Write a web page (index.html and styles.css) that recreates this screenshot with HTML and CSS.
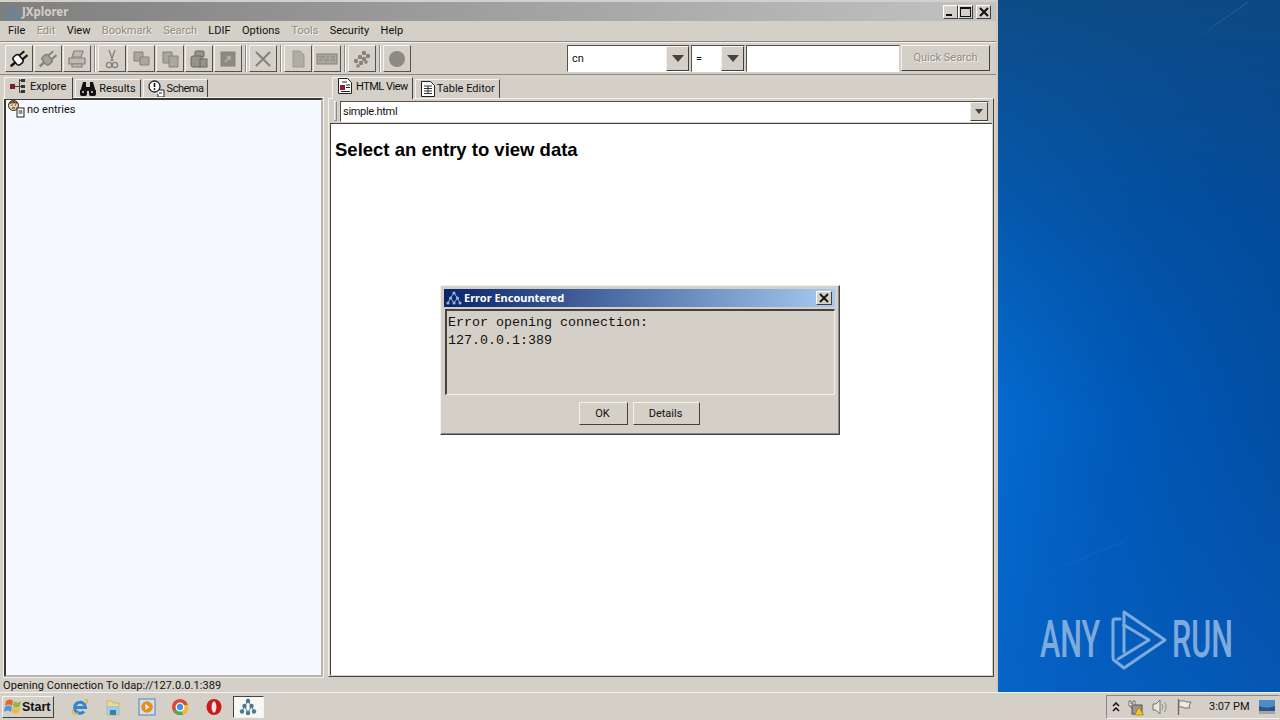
FILE: index.html
```html
<!DOCTYPE html>
<html lang="en">

<head>
  <meta charset="UTF-8" />
  <title>JXplorer</title>
  <link rel="stylesheet" href="styles.css">
</head>

<body>
  <div class="desktop">
    <div class="window">
      <div class="titlebar">
        <svg class="title-icon" width="16" height="16" viewBox="0 0 16 16"><path d="M8 3L4 8l-2 5M8 3l4 5 2 5M4 8l4 5 4-5" fill="none" stroke="#5f86a8"/><g fill="#5f86a8"><circle cx="8" cy="3" r="2"/><circle cx="4" cy="8" r="2"/><circle cx="12" cy="8" r="2"/><circle cx="2" cy="13" r="2"/><circle cx="8" cy="13" r="2"/><circle cx="14" cy="13" r="2"/></g></svg>
        <span class="title-text">JXplorer</span>
        <div class="win-buttons">
          <div class="win-btn"><span class="glyph-min"></span></div>
          <div class="win-btn"><span class="glyph-max"></span></div>
          <div class="win-btn win-close">
            <svg width="10" height="10" viewBox="0 0 10 10"><path d="M1 1l8 8M9 1l-8 8" stroke="#111" stroke-width="2"/></svg>
          </div>
        </div>
      </div>

      <div class="menubar">
        <span class="menu-item">File</span>
        <span class="menu-item off">Edit</span>
        <span class="menu-item">View</span>
        <span class="menu-item off">Bookmark</span>
        <span class="menu-item off">Search</span>
        <span class="menu-item">LDIF</span>
        <span class="menu-item">Options</span>
        <span class="menu-item off">Tools</span>
        <span class="menu-item">Security</span>
        <span class="menu-item">Help</span>
      </div>

      <div class="toolbar">
        <div class="tool-group">
          <div class="tool">
            <svg width="22" height="22" viewBox="0 0 22 22"><g transform="rotate(-40 11 11)"><rect x="0" y="10" width="6" height="2.500" fill="#111"/><rect x="6" y="6" width="7.500" height="10" rx="2.500" fill="#fff" stroke="#111" stroke-width="1.500"/><path d="M13 8.500h7M13 13.500h7" stroke="#111" stroke-width="2"/></g></svg>
          </div>
          <div class="tool">
            <svg width="22" height="22" viewBox="0 0 22 22"><g transform="rotate(-40 11 11)"><rect x="0" y="10" width="6" height="2.500" fill="#85827b"/><rect x="6" y="6" width="7.500" height="10" rx="2.500" fill="#a5a29b" stroke="#85827b" stroke-width="1.500"/><path d="M13 8.500h7M13 13.500h7" stroke="#85827b" stroke-width="2"/></g></svg>
          </div>
          <div class="tool">
            <svg width="22" height="22" viewBox="0 0 22 22"><g fill="#bcb9b1" stroke="#85827b" stroke-width="1.200"><path d="M8 3h9l-2 6H6z"/><path d="M3 10h16v6H3z"/><path d="M6 16h10v3H6z"/></g></svg>
          </div>
        </div>
        <div class="tool-group">
          <div class="tool">
            <svg width="22" height="22" viewBox="0 0 22 22"><g fill="none" stroke="#85827b" stroke-width="1.300"><path d="M8 2l4 11M14 2l-4 11"/><circle cx="8" cy="17" r="2.600"/><circle cx="14" cy="17" r="2.600"/></g></svg>
          </div>
          <div class="tool">
            <svg width="22" height="22" viewBox="0 0 22 22"><g fill="#aaa79f" stroke="#85827b"><path d="M4 4h9v9H4z"/><path d="M10 9h9v8H10z"/></g></svg>
          </div>
          <div class="tool">
            <svg width="22" height="22" viewBox="0 0 22 22"><g fill="#aaa79f" stroke="#85827b"><path d="M4 4h9v11H4z"/><path d="M10 8h9v11H10z"/></g></svg>
          </div>
          <div class="tool">
            <svg width="22" height="22" viewBox="0 0 22 22"><g fill="#96938b" stroke="#6c6962"><rect x="7" y="3" width="9" height="6" rx="1"/><rect x="3" y="8" width="11" height="11" rx="2"/><rect x="12" y="11" width="7" height="8"/></g></svg>
          </div>
          <div class="tool">
            <svg width="22" height="22" viewBox="0 0 22 22"><rect x="4" y="4" width="14" height="14" fill="#8d8a83" stroke="#85827b"/><path d="M8 14l5-5M10 9h3v3" stroke="#b5b2aa" stroke-width="1.500" fill="none"/></svg>
          </div>
        </div>
        <div class="tool-group">
          <div class="tool">
            <svg width="22" height="22" viewBox="0 0 22 22"><path d="M4 4l14 14M18 4L4 18" stroke="#85827b" stroke-width="2"/></svg>
          </div>
        </div>
        <div class="tool-group">
          <div class="tool">
            <svg width="22" height="22" viewBox="0 0 22 22"><path d="M6 3h7l4 4v12H6z" fill="#b0ada5" stroke="#9c9991"/></svg>
          </div>
          <div class="tool">
            <svg width="22" height="22" viewBox="0 0 22 22"><rect x="1" y="6" width="20" height="10" fill="#aaa79f" stroke="#85827b"/><path d="M3 9h6M11 9h2M15 9h4M3 12h3M8 12h5M15 12h4" stroke="#85827b"/></svg>
          </div>
        </div>
        <div class="tool-group">
          <div class="tool">
            <svg width="22" height="22" viewBox="0 0 22 22"><g fill="#85827b"><circle cx="13" cy="5" r="2.200"/><circle cx="17" cy="8" r="2.200"/><circle cx="9" cy="9" r="2.200"/><circle cx="13" cy="11" r="2.200"/><circle cx="5" cy="13" r="2.200"/><circle cx="10" cy="15" r="2.200"/><circle cx="15" cy="14" r="1.800"/><circle cx="7" cy="18" r="1.800"/></g></svg>
          </div>
        </div>
        <div class="tool-group">
          <div class="tool">
            <svg width="22" height="22" viewBox="0 0 22 22"><circle cx="11" cy="11" r="8" fill="#8d8a83"/></svg>
          </div>
        </div>

        <div class="search">
          <div class="combo combo-attr">
            <span class="combo-value">cn</span>
            <div class="combo-btn"><span class="arrow"></span></div>
          </div>
          <div class="combo combo-op">
            <span class="combo-value">=</span>
            <div class="combo-btn"><span class="arrow"></span></div>
          </div>
          <div class="search-input"></div>
          <div class="quick-btn">Quick Search</div>
        </div>
      </div>

      <div class="panes">
        <div class="pane pane-left">
          <div class="tabs">
            <div class="tab active tab-wide">
              <svg width="18" height="18" viewBox="0 0 18 18"><rect x="1" y="7" width="5" height="5" fill="#7a1f30"/><path d="M6 9.500h4M10.500 2v14M10 3.500h2M10 9.500h2M10 15h2" stroke="#444"/><rect x="12" y="2" width="4" height="3" fill="#333"/><rect x="12" y="8" width="4" height="3" fill="#333"/><rect x="12" y="13" width="4" height="3" fill="#333"/></svg>
              Explore
            </div>
            <div class="tab">
              <svg width="16" height="16" viewBox="0 0 16 16"><g fill="#111"><path d="M3 1h3v5h1v2H1z"/><path d="M10 1h3l2 7H9V6h1z"/><rect x="0" y="8" width="7" height="7" rx="2"/><rect x="9" y="8" width="7" height="7" rx="2"/><rect x="6" y="6" width="4" height="4"/></g><circle cx="3" cy="11" r="1" fill="#ddd"/><circle cx="12" cy="11" r="1" fill="#ddd"/></svg>
              Results
            </div>
            <div class="tab tab-tight tab-snug">
              <svg width="18" height="18" viewBox="0 0 18 18"><circle cx="6.500" cy="6.500" r="5.500" fill="#fff" stroke="#222" stroke-width="1.300"/><path d="M6.500 3v4" stroke="#111" stroke-width="1.600"/><circle cx="6.500" cy="9" r=".9" fill="#111"/><path d="M11 10h5v7h-6v-3" fill="#fff" stroke="#222"/><path d="M11 13h3" stroke="#222"/></svg>
              Schema
            </div>
          </div>
          <div class="tree">
            <div class="tree-row">
              <svg width="18" height="18" viewBox="0 0 18 18"><circle cx="6.500" cy="5.500" r="5" fill="#e7cfa1" stroke="#222"/><path d="M2 4c2-4 7-4 9 0-3-1-6-1-9 0z" fill="#6b4a26"/><path d="M4.500 5h1M8 5h1M5 8h3" stroke="#222"/><rect x="10" y="8" width="7" height="9" fill="#fff" stroke="#222"/><path d="M11.500 11h4M11.500 13h4" stroke="#222"/></svg>
              <span>no entries</span>
            </div>
          </div>
        </div>

        <div class="pane pane-right">
          <div class="tabs">
            <div class="tab active tab-tight">
              <svg width="16" height="18" viewBox="0 0 16 18"><path d="M1.500 1.500h9l4 4v11h-13z" fill="#fff" stroke="#222"/><rect x="3" y="8" width="5" height="5" fill="#a01245"/><path d="M5 5h5M9 8h4M9 10.500h4M4 14.500h9" stroke="#222"/></svg>
              HTML View
            </div>
            <div class="tab tab-snug">
              <svg width="16" height="18" viewBox="0 0 16 18"><path d="M1.500 1.500h9l4 4v11h-13z" fill="#fff" stroke="#222"/><path d="M4 6h8M4 8.500h8M4 11h8M4 13.500h8M8 6v8" stroke="#333"/></svg>
              Table Editor
            </div>
          </div>
          <div class="view-box">
            <div class="template-row">
              <div class="gripper"></div>
              <div class="template-combo">
                <span class="template-value">simple.html</span>
                <div class="combo-btn small"><span class="arrow"></span></div>
              </div>
            </div>
            <div class="html-view">
              <h1>Select an entry to view data</h1>
            </div>
          </div>
        </div>
      </div>

      <div class="statusbar">Opening Connection To ldap://127.0.0.1:389</div>
    </div>

    <div class="wallpaper">
      <div class="streak streak-top"></div>
      <div class="streak streak-low"></div>
      <div class="watermark">
        <span class="wm-word">ANY</span>
        <svg class="wm-logo" width="58" height="60" viewBox="0 0 58 60"><g fill="none" stroke="#7faadd" stroke-width="3" stroke-linejoin="round" stroke-linecap="round"><path d="M11 9H6Q4 9 4 11V48Q4 50 6 51L15 58 56 30 15 2V42"/><path d="M15 15 40 30 9 49"/></g></svg>
        <span class="wm-word">RUN</span>
      </div>
    </div>

    <div class="dialog">
      <div class="dialog-title">
        <svg width="16" height="16" viewBox="0 0 16 16"><path d="M8 3L4.500 8 2 13M8 3l3.500 5L14 13M4.500 8L8 13l3.500-5" fill="none" stroke="#8fb4d8"/><g fill="#8fb4d8"><circle cx="8" cy="3" r="1.600"/><circle cx="4.500" cy="8" r="1.600"/><circle cx="11.500" cy="8" r="1.600"/><circle cx="2" cy="13" r="1.600"/><circle cx="8" cy="13" r="1.600"/><circle cx="14" cy="13" r="1.600"/></g></svg>
        <span class="dialog-title-text">Error Encountered</span>
        <div class="win-btn dialog-close">
          <svg width="10" height="10" viewBox="0 0 10 10"><path d="M1 1l8 8M9 1l-8 8" stroke="#111" stroke-width="1.800"/></svg>
        </div>
      </div>
      <pre class="dialog-msg">Error opening connection:
127.0.0.1:389</pre>
      <div class="dialog-buttons">
        <div class="btn btn-ok">OK</div>
        <div class="btn btn-details">Details</div>
      </div>
    </div>
  </div>

  <div class="taskbar">
    <div class="start">
      <svg width="18" height="18" viewBox="0 0 18 18"><path d="M2 3c3-2 5-2 7 0L8 8C6 6 4 6 1 8z" fill="#e8642a"/><path d="M10 3c2 2 4 2 7 0l-1 5c-3 2-5 2-7 0z" fill="#8db83f"/><path d="M1 9c3-2 5-2 7 0l-1 5c-2-2-4-2-7 0z" fill="#4c97dc"/><path d="M9 9c2 2 4 2 7 0l-1 5c-3 2-5 2-7 0z" fill="#f2bb2c"/></svg>
      Start
    </div>
    <div class="task-icons">
      <div class="task-icon">
        <svg width="18" height="18" viewBox="0 0 18 18"><path d="M4 9.500h10.500A5.500 5.500 0 1 0 13 13.500" fill="none" stroke="#2f86d2" stroke-width="3"/><path d="M14 2c3-1 3 1 1 4M2 11c-2 5 1 6 5 4" fill="none" stroke="#e3b63c" stroke-width="1.500"/></svg>
      </div>
      <div class="task-icon">
        <svg width="18" height="18" viewBox="0 0 18 18"><path d="M3 3h5l1 2h6v12H3z" fill="#f0d98a" stroke="#c9b26a"/><path d="M3 8h12v9H3z" fill="#9ccde2"/><path d="M6 17v-5h6v5" fill="#3c7fa8"/></svg>
      </div>
      <div class="task-icon">
        <svg width="18" height="18" viewBox="0 0 18 18"><rect x="1" y="1" width="16" height="16" fill="#cfe0ef" stroke="#4f86bb"/><circle cx="9" cy="9" r="5.800" fill="#ef8a1d"/><path d="M7.500 6l4 3-4 3z" fill="#fff"/></svg>
      </div>
      <div class="task-icon">
        <svg width="18" height="18" viewBox="0 0 18 18"><circle cx="9" cy="9" r="8" fill="#d9483b"/><path d="M9 9L2.200 13A8 8 0 0 0 12 16.400z" fill="#4caf50"/><path d="M9 9l3 7.400A8 8 0 0 0 16.800 7H9z" fill="#f3c02e"/><circle cx="9" cy="9" r="3.800" fill="#4a8fe0" stroke="#fff" stroke-width="1.300"/></svg>
      </div>
      <div class="task-icon">
        <svg width="18" height="18" viewBox="0 0 18 18"><ellipse cx="9" cy="9" rx="7.500" ry="8" fill="#c81a1a"/><ellipse cx="9" cy="9" rx="2.400" ry="5.800" fill="#f6e6e6"/></svg>
      </div>
      <div class="task-icon active">
        <svg width="18" height="18" viewBox="0 0 18 18"><path d="M9 3L5.500 8 3 13.500M9 3l3.500 5 2.500 5.500M5.500 8L9 15l3.500-7" fill="none" stroke="#4d7792"/><g fill="#4d7792"><circle cx="9" cy="3" r="2.200"/><circle cx="5.500" cy="8" r="2.200"/><circle cx="12.500" cy="8" r="2.200"/><circle cx="3" cy="13.500" r="2.200"/><circle cx="9" cy="15" r="2.200"/><circle cx="15" cy="13.500" r="2.200"/></g></svg>
      </div>
    </div>
    <div class="tray">
      <svg width="10" height="12" viewBox="0 0 10 12"><path d="M2 5l3-3 3 3M2 10l3-3 3 3" fill="none" stroke="#111" stroke-width="1.500"/></svg>
      <svg width="18" height="18" viewBox="0 0 18 18"><path d="M2 3h2v3h2V3h2v5H6v2H4V8H2z" fill="#fff" stroke="#555" stroke-width=".8"/><rect x="5" y="7" width="10" height="9" fill="#9a978f" stroke="#555"/><path d="M12 9l4.500 8h-9z" fill="#f4c51e" stroke="#8a6d0c" stroke-width=".6"/></svg>
      <svg width="18" height="18" viewBox="0 0 18 18"><path d="M2 6h3l4-4v14l-4-4H2z" fill="#eceae4" stroke="#77746d"/><path d="M11 6c1 2 1 4 0 6M13.500 4c2 3 2 7 0 10" fill="none" stroke="#8f8c85"/></svg>
      <svg width="18" height="18" viewBox="0 0 18 18"><path d="M3.500 1v16" stroke="#6b6862" stroke-width="1.300"/><path d="M4 3h6l1 1h5l-2 4 1 2h-6l-1-1H4z" fill="#eceae4" stroke="#77746d"/></svg>
      <span class="clock">3:07 PM</span>
      <svg class="show-desktop" width="16" height="14" viewBox="0 0 16 14"><rect width="16" height="14" fill="#27558f"/><path d="M0 0h16v6c-5 2-11 2-16 0z" fill="#4d8bc9"/><rect x="0" y="11" width="16" height="3" fill="#a8a59d"/></svg>
    </div>
  </div>
</body>

</html>
```

FILE: styles.css
```css
* {
  margin: 0;
  padding: 0;
  box-sizing: border-box;
}

html, body {
  width: 1280px;
  height: 720px;
  overflow: hidden;
  background: #d4d0c8;
  font-family: Roboto, "Liberation Sans", sans-serif;
  font-size: 11px;
  color: #111;
}

body {
  display: flex;
  flex-direction: column;
}

.desktop {
  position: relative;
  display: flex;
  height: 692px;
}

/* main window */
.window {
  width: 998px;
  display: flex;
  flex-direction: column;
  background: #d4d0c8;
  border-right: 2px solid #cfc8bc;
  padding-top: 2px;
}

.titlebar {
  height: 19px;
  flex: none;
  display: flex;
  align-items: center;
  padding: 0 5px 0 4px;
  background: linear-gradient(90deg, #7f7f7f, #c2c2c2);
}

.title-icon {
  flex: none;
}

.title-text {
  margin-left: 2px;
  font-family: "Noto Sans", sans-serif;
  font-size: 11.500px;
  font-weight: 700;
  color: #d4d0c8;
}

.win-buttons {
  margin-left: auto;
  display: flex;
}

.win-btn {
  width: 15px;
  height: 14px;
  display: flex;
  align-items: center;
  justify-content: center;
  background: #d4d0c8;
  border: 1px solid;
  border-color: #fff #404040 #404040 #fff;
}

.win-close {
  margin-left: 3px;
}

.glyph-min {
  width: 6px;
  height: 2px;
  background: #111;
  margin-top: 7px;
  margin-right: 3px;
}

.glyph-max {
  width: 11px;
  height: 10px;
  border: 1px solid #111;
  border-top-width: 2px;
}

.menubar {
  height: 21px;
  flex: none;
  display: flex;
  align-items: center;
  gap: 11.400px;
  padding: 0 0 2px 8px;
  border-bottom: 1px solid #8c8984;
}

.off {
  color: #8f8c85;
  text-shadow: 1px 1px 0 #f4f2ee;
}

.toolbar {
  height: 33px;
  flex: none;
  display: flex;
  align-items: center;
  padding-left: 5px;
  border-top: 1px solid #f2f0ec;
  border-bottom: 1px solid #8c8984;
}

.tool-group {
  display: flex;
  gap: 1px;
  padding-right: 3px;
  margin-right: 3px;
  border-right: 1px solid #8c8984;
  box-shadow: 1px 0 0 #fff;
}

.tool {
  width: 28px;
  height: 27px;
  display: flex;
  align-items: center;
  justify-content: center;
  border: 1px solid;
  border-color: #f4f2ee #55524d #55524d #f4f2ee;
}

.tool-group:nth-child(6) {
  border-right: 0;
  box-shadow: none;
}

.search {
  margin-left: auto;
  margin-right: 6px;
  display: flex;
  gap: 1px;
}

.combo {
  height: 27px;
  display: flex;
  align-items: center;
  background: #fff;
  border: 1px solid;
  border-color: #55524d #d4d0c8 #fff #55524d;
}

.combo-attr {
  width: 123px;
}

.combo-op {
  width: 54px;
}

.combo-value {
  flex: 1;
  padding-left: 4px;
}

.combo-btn {
  width: 23px;
  height: 25px;
  flex: none;
  display: flex;
  align-items: center;
  justify-content: center;
  background: #d4d0c8;
  border: 1px solid;
  border-color: #f4f2ee #404040 #404040 #f4f2ee;
}

.combo-btn.small {
  width: 18px;
  height: 19px;
}

.arrow {
  width: 0;
  height: 0;
  border-left: 6px solid transparent;
  border-right: 6px solid transparent;
  border-top: 7px solid #45433f;
}

.small .arrow {
  border-left-width: 4px;
  border-right-width: 4px;
  border-top-width: 5px;
}

.search-input {
  width: 154px;
  height: 27px;
  background: #fff;
  border: 1px solid;
  border-color: #55524d #d4d0c8 #fff #55524d;
}

.quick-btn {
  width: 89px;
  height: 26px;
  padding-bottom: 2px;
  display: flex;
  align-items: center;
  justify-content: center;
  color: #8f8c85;
  text-shadow: 1px 1px 0 #f4f2ee;
  border: 1px solid;
  border-color: #f4f2ee #404040 #404040 #f4f2ee;
}

.panes {
  flex: 1;
  min-height: 0;
  display: flex;
  gap: 5px;
  padding: 1px 2px 0 4px;
}

.pane {
  display: flex;
  flex-direction: column;
}

.pane-left {
  width: 319px;
}

.pane-right {
  flex: 1;
}

.tabs {
  height: 22px;
  flex: none;
  display: flex;
  align-items: flex-end;
  gap: 2px;
}

.pane-right .tabs {
  padding-left: 4px;
}

.tab {
  height: 19px;
  display: flex;
  align-items: center;
  gap: 3px;
  padding: 0 4px 1px;
  border: 1px solid;
  border-color: #f4f2ee #45433f transparent #f4f2ee;
  border-bottom: 0;
  white-space: nowrap;
}

.tab.active {
  height: 22px;
  background: #d4d0c8;
  margin-bottom: -1px;
  position: relative;
  padding-bottom: 5px;
}

.tab.tab-wide {
  padding-right: 6px;
}

.tab-tight {
  letter-spacing: -.5px;
}

.tab.tab-snug {
  gap: 1px;
}

.tree {
  flex: 1;
  background: #f6f9ff;
  border: 2px solid;
  border-color: #3a3935 #b8b5ae #b8b5ae #3a3935;
  outline: 1px solid #f4f2ee;
}

.tree-row {
  display: flex;
  align-items: center;
  gap: 2px;
  padding-left: 1px;
}

.view-box {
  flex: 1;
  min-height: 0;
  display: flex;
  flex-direction: column;
  padding: 0 1px 1px;
  border: 1px solid;
  border-color: #f4f2ee #45433f #45433f #f4f2ee;
}

.template-row {
  height: 24px;
  flex: none;
  display: flex;
  align-items: center;
  padding: 0 3px 0 4px;
  gap: 3px;
}

.gripper {
  width: 3px;
  height: 20px;
  border: 1px solid;
  border-color: #f4f2ee #8c8984 #8c8984 #f4f2ee;
}

.template-combo {
  flex: 1;
  height: 21px;
  display: flex;
  align-items: center;
  background: #fff;
  border: 1px solid;
  border-color: #55524d #d4d0c8 #fff #55524d;
}

.template-value {
  flex: 1;
  padding-left: 2px;
  letter-spacing: -.3px;
}

.html-view {
  flex: 1;
  background: #fff;
  border-top: 1px solid #45433f;
  border-left: 1px solid #45433f;
  padding: 15px 4px;
}

h1 {
  font-family: "Liberation Sans", Arial, sans-serif;
  font-size: 18.500px;
  font-weight: 700;
  line-height: 22px;
  color: #000;
}

.statusbar {
  height: 15px;
  flex: none;
  padding: 3px 0 0 3px;
  line-height: 12px;
  white-space: nowrap;
  letter-spacing: .07px;
}

/* wallpaper */
.wallpaper {
  position: relative;
  flex: 1;
  overflow: hidden;
  background:
    linear-gradient(180deg, rgba(14, 72, 128, .92) 0%, rgba(6, 70, 140, .55) 30%, rgba(6, 70, 140, 0) 60%),
    linear-gradient(180deg, rgba(10, 100, 200, 0) 60%, rgba(10, 100, 200, .5) 100%),
    linear-gradient(100deg, #0674dc 0%, #0059b8 50%, #024a9c 100%);
}

.streak {
  position: absolute;
  height: 1px;
  background: linear-gradient(90deg, rgba(255, 255, 255, 0), rgba(255, 255, 255, .14));
}

.streak-top {
  width: 76px;
  top: 24px;
  right: 26px;
  transform: rotate(-35deg);
}

.streak-low {
  width: 130px;
  top: 565px;
  left: 2px;
  opacity: .5;
  transform: rotate(-22deg);
}

.watermark {
  position: absolute;
  left: 42px;
  top: 610px;
  display: flex;
  align-items: center;
  color: #7faadd;
}

.wm-word {
  width: 61px;
  font-family: Roboto, "Liberation Sans", sans-serif;
  font-size: 51px;
  font-weight: 500;
  line-height: 60px;
  transform: scaleX(.6);
  transform-origin: left center;
}

.wm-logo {
  margin: 0 5px 0 8px;
}

/* error dialog */
.dialog {
  position: absolute;
  left: 440px;
  top: 285px;
  width: 400px;
  height: 150px;
  display: flex;
  flex-direction: column;
  background: #d4d0c8;
  padding: 3px 4px 0 3px;
  border: 1px solid;
  border-color: #f4f2ee #45433f #45433f #f4f2ee;
  box-shadow: inset -1px -1px 0 #8c8984;
}

.dialog-title {
  height: 18px;
  flex: none;
  display: flex;
  align-items: center;
  gap: 2px;
  padding: 0 3px 0 2px;
  background: linear-gradient(90deg, #0a246a, #a6caf0);
}

.dialog-title-text {
  flex: 1;
  padding-bottom: 2px;
  font-family: "Noto Sans", sans-serif;
  font-weight: 700;
  color: #fff;
}

.dialog-close {
  width: 16px;
  height: 14px;
}

.dialog-msg {
  height: 86px;
  flex: none;
  margin: 2px 0 0 1px;
  padding: 3px 2px 0 1px;
  font-family: "Liberation Mono", monospace;
  font-size: 13.330px;
  line-height: 18px;
  border: 1px solid;
  border-color: #45433f #f4f2ee #f4f2ee #45433f;
  border-top-width: 2px;
  border-left-width: 2px;
}

.dialog-buttons {
  flex: 1;
  display: flex;
  justify-content: center;
  gap: 5px;
  padding-top: 7px;
}

.btn {
  height: 23px;
  padding: 0 2px 1px 0;
  display: flex;
  align-items: center;
  justify-content: center;
  border: 1px solid;
  border-color: #f4f2ee #45433f #45433f #f4f2ee;
}

.btn-ok {
  width: 49px;
}

.btn-details {
  width: 67px;
}

/* taskbar */
.taskbar {
  height: 28px;
  flex: none;
  display: flex;
  align-items: center;
  background: #d4d0c8;
  border-top: 1px solid #f4f2ee;
  padding-left: 2px;
}

.start {
  width: 52px;
  height: 22px;
  display: flex;
  align-items: center;
  padding-left: 1px;
  font-family: "Liberation Sans", sans-serif;
  font-size: 12.500px;
  font-weight: 700;
  border: 1px solid;
  border-color: #f4f2ee #45433f #45433f #f4f2ee;
}

.task-icons {
  display: flex;
  margin-left: 9px;
}

.task-icon {
  width: 33.500px;
  height: 22px;
  display: flex;
  align-items: center;
  justify-content: center;
}

.task-icon.active {
  width: 31px;
  margin-left: 2px;
  background: #f7f7f5;
  border: 1px solid;
  border-color: #45433f #f4f2ee #f4f2ee #45433f;
}

.tray {
  margin-left: auto;
  width: 174px;
  height: 24px;
  display: flex;
  align-items: center;
  gap: 6px;
  padding-left: 4px;
  border: 1px solid;
  border-color: #8c8984 transparent #f4f2ee #8c8984;
}

.clock {
  margin-left: 10px;
  white-space: nowrap;
}

.show-desktop {
  margin-left: 4px;
}
```
